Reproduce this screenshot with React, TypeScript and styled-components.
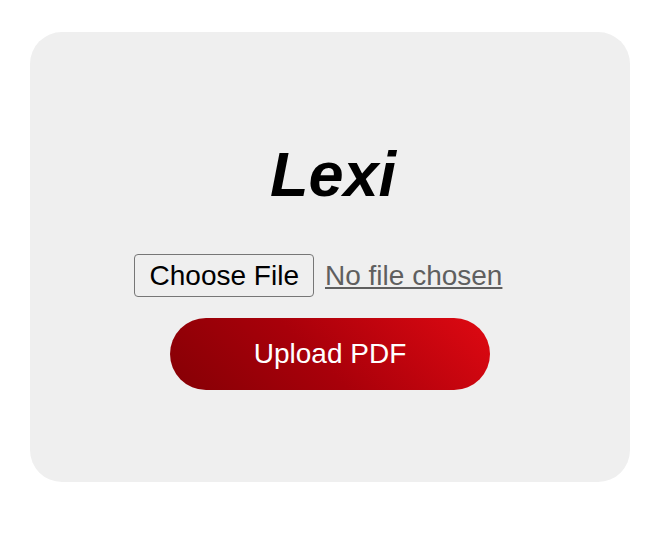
import React, {useState} from "react";
import styled, {createGlobalStyle} from "styled-components";

const GlobalStyle = createGlobalStyle`
  body {
    margin: 0;
    background: #ffffff;
    font-family: "Liberation Sans", Arial, sans-serif;
  }
`;

const Page = styled.div`
  padding: 32px 0 0 30px;
`;

const Card = styled.div`
  width: 600px;
  box-sizing: border-box;
  background: #efefef;
  border-radius: 32px;
  padding: 106px 0 92px;
  display: flex;
  flex-direction: column;
  align-items: center;
`;

const Title = styled.h1`
  margin: 0 0 44px 6px;
  font-size: 63px;
  line-height: 72px;
  font-weight: bold;
  font-style: italic;
  color: #000;
`;

const FileRow = styled.label`
  display: flex;
  align-items: center;
  gap: 11px;
  padding-right: 24px;
  cursor: pointer;
`;

const HiddenInput = styled.input`
  display: none;
`;

const ChooseButton = styled.span`
  display: inline-flex;
  align-items: center;
  height: 43px;
  box-sizing: border-box;
  padding: 0 14px 0 15px;
  border: 1px solid #767676;
  border-radius: 4px;
  background: #efefef;
  color: #000;
  font-size: 28px;
`;

const FileName = styled.span`
  font-size: 28px;
  color: #5f5f5f;
  text-decoration: underline;
  text-underline-offset: 2px;
`;

const UploadButton = styled.button`
  margin-top: 21px;
  width: 320px;
  height: 72px;
  border: none;
  border-radius: 36px;
  background: linear-gradient(45deg, #850005 0%, #a8000a 45%, #df0912 100%);
  color: #fff;
  font-family: "Liberation Sans", Arial, sans-serif;
  font-size: 28px;
  cursor: pointer;
`;

export default function App() {
  const [file, setFile] = useState<string | null>(null);
  return <>
    <GlobalStyle/>
    <Page>
      <Card>
        <Title>Lexi</Title>
        <FileRow>
          <HiddenInput type="file" accept="application/pdf"
            onChange={e => setFile(e.target.files?.[0]?.name ?? null)}/>
          <ChooseButton>Choose File</ChooseButton>
          <FileName>{file ?? "No file chosen"}</FileName>
        </FileRow>
        <UploadButton>Upload PDF</UploadButton>
      </Card>
    </Page>
  </>;
}
